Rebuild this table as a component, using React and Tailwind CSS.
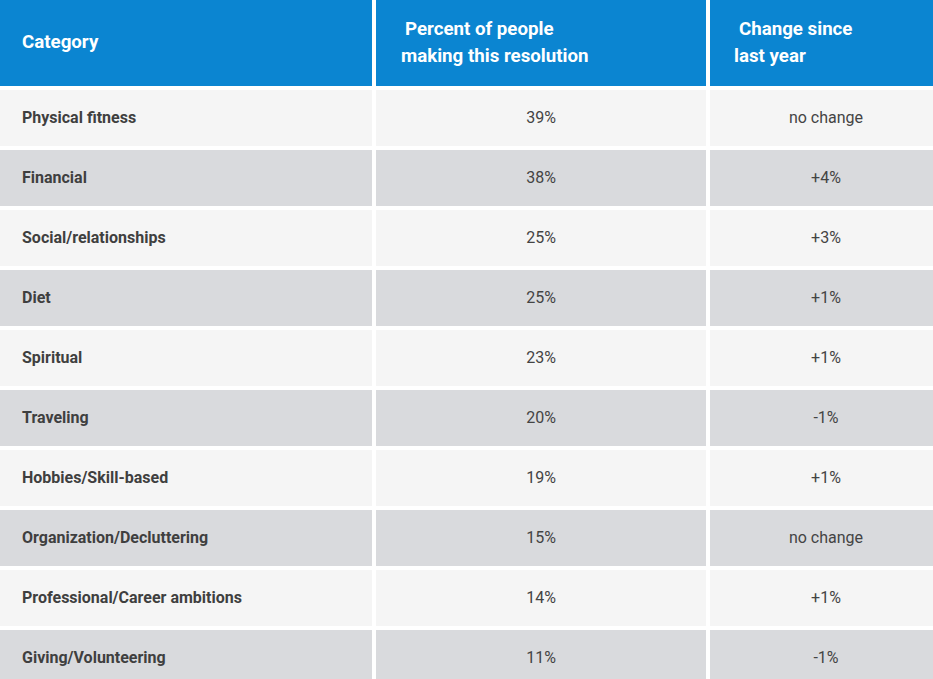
import React from "react";

const rows = [
  ["Physical fitness", "39%", "no change"],
  ["Financial", "38%", "+4%"],
  ["Social/relationships", "25%", "+3%"],
  ["Diet", "25%", "+1%"],
  ["Spiritual", "23%", "+1%"],
  ["Traveling", "20%", "-1%"],
  ["Hobbies/Skill-based", "19%", "+1%"],
  ["Organization/Decluttering", "15%", "no change"],
  ["Professional/Career ambitions", "14%", "+1%"],
  ["Giving/Volunteering", "11%", "-1%"],
];

export default function App() {
  return (
    <div className="w-[933px] h-[679px] overflow-hidden bg-white" style={{ fontFamily: "Roboto, 'Noto Sans', sans-serif" }}>
      <div className="grid grid-cols-[372px_330px_232px] gap-x-1 gap-y-1 w-[942px]">
        <div className="bg-[#0b85d1] h-[86px] flex items-center pl-[22px] pb-[1px] text-white font-bold text-[18.7px]">
          Category
        </div>
        <div className="bg-[#0b85d1] h-[86px] flex flex-col justify-center pl-[25px] text-white font-bold text-[18.7px] leading-[27px] pb-[1px]">
          <span className="pl-[4px]">Percent of people</span>
          <span>making this resolution</span>
        </div>
        <div className="bg-[#0b85d1] h-[86px] flex flex-col justify-center pl-[24px] text-white font-bold text-[18.7px] leading-[27px] pb-[1px]">
          <span className="pl-[5px]">Change since</span>
          <span>last year</span>
        </div>
        {rows.map((r, i) => {
          const bg = i % 2 === 0 ? "bg-[#f5f5f5]" : "bg-[#d9dadd]";
          return (
            <React.Fragment key={i}>
              <div className={`${bg} h-[56px] flex items-center pl-[22px] font-bold text-[16px] text-[#3f3f3f]`}>
                {r[0]}
              </div>
              <div className={`${bg} h-[56px] flex items-center justify-center text-[16px] text-[#444444]`}>
                {r[1]}
              </div>
              <div className={`${bg} h-[56px] flex items-center justify-center text-[16px] text-[#444444]`}>
                {r[2]}
              </div>
            </React.Fragment>
          );
        })}
      </div>
    </div>
  );
}
